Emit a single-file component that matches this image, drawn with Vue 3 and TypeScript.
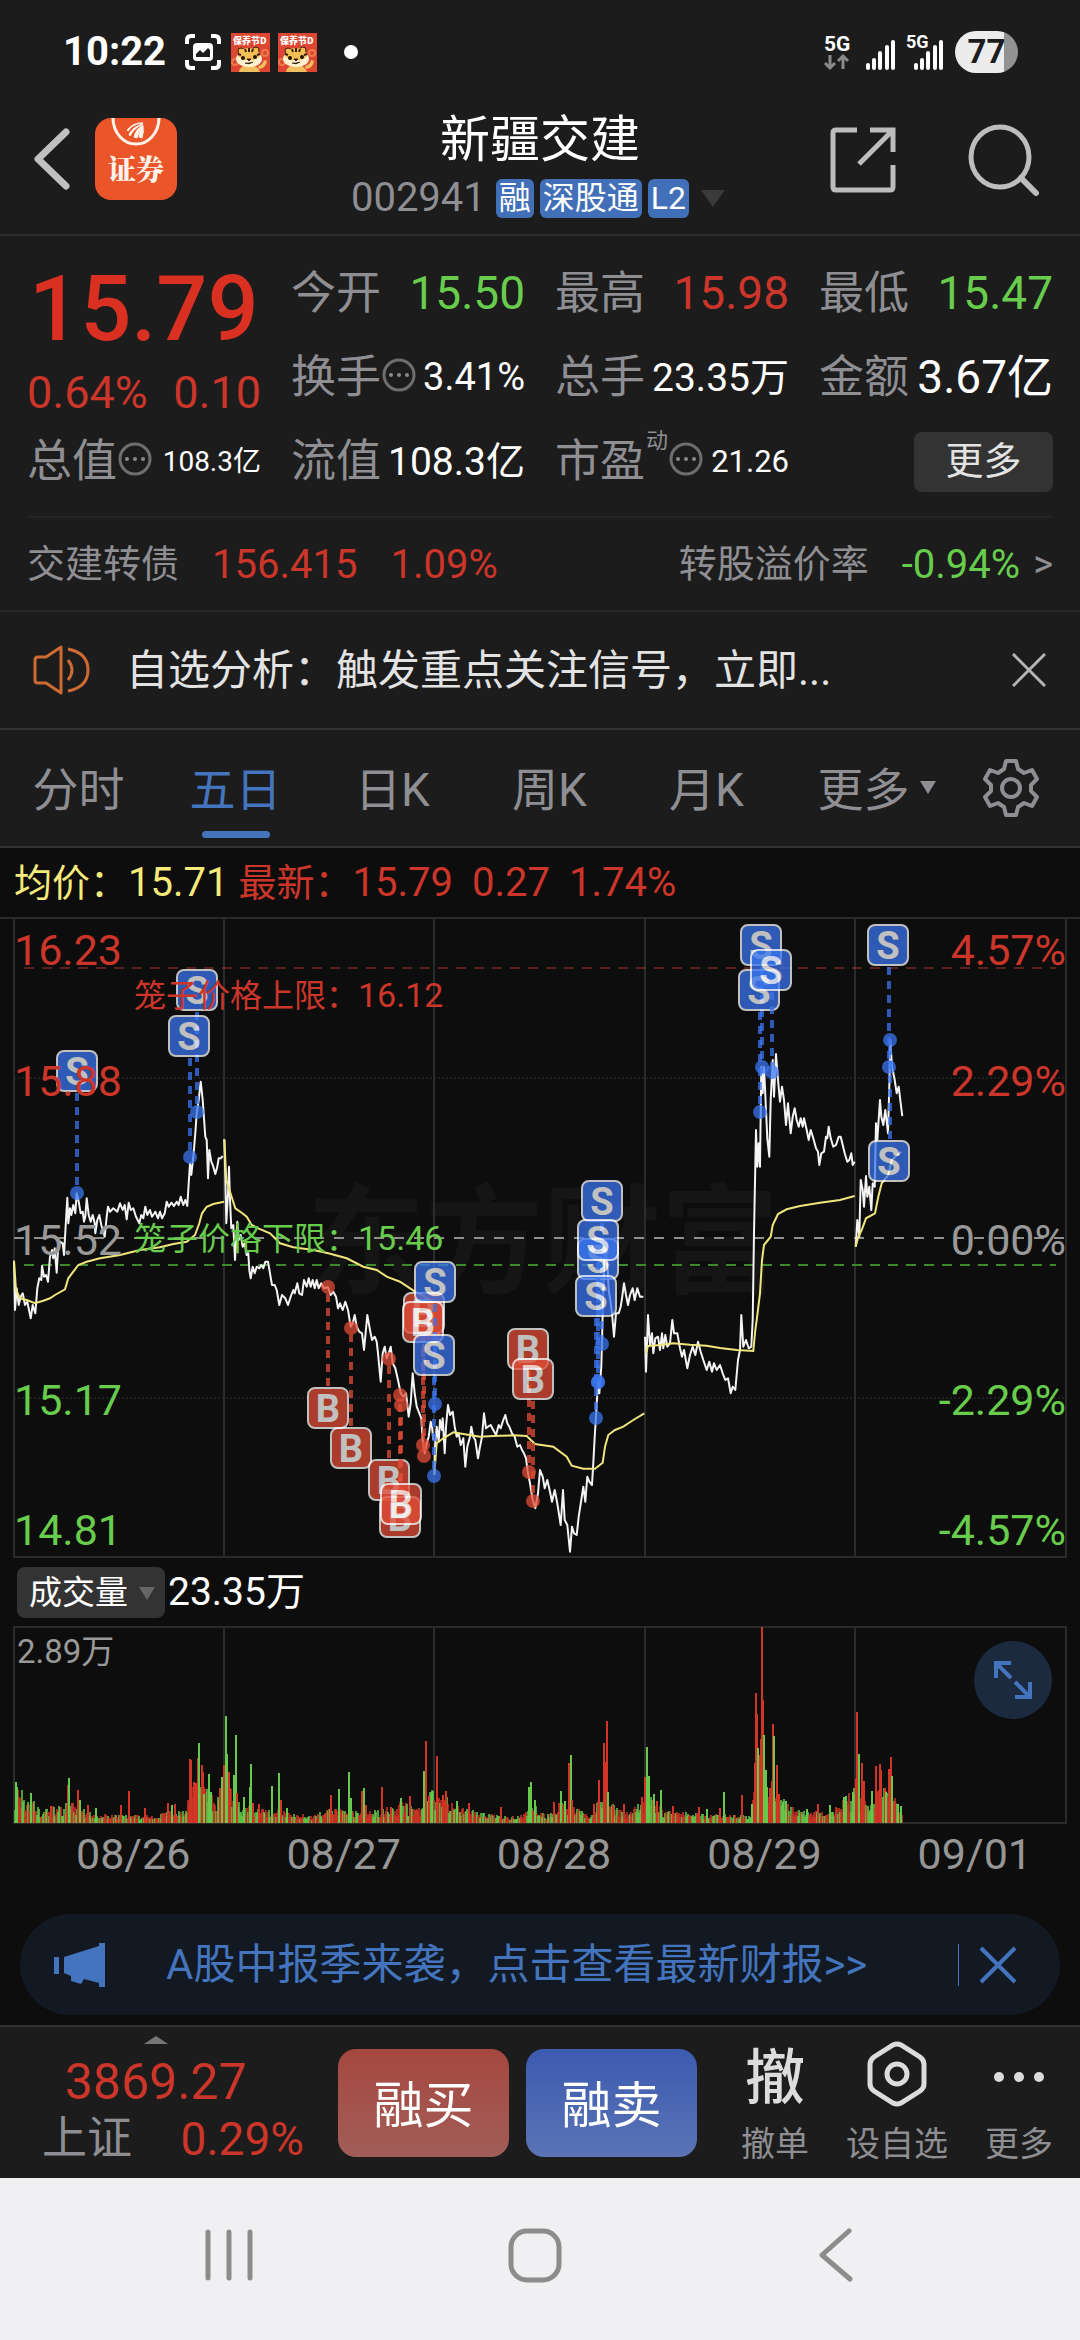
<script setup lang="ts">
import { ref } from 'vue'

type Tone = 'up' | 'down' | 'flat'
interface Quote { label: string; value: string; tone: Tone; size: string; info?: boolean; sup?: string }
interface Marker { side: 'S' | 'B'; x: number; y: number; dotX: number; dotY: number }
interface Bar { x: number; h: number; up: boolean; minor: boolean }

const quotes: Quote[] = [
  { label: '今开', value: '15.50', tone: 'down', size: 'lg' },
  { label: '最高', value: '15.98', tone: 'up', size: 'lg' },
  { label: '最低', value: '15.47', tone: 'down', size: 'lg' },
  { label: '换手', value: '3.41%', tone: 'flat', size: 'md', info: true },
  { label: '总手', value: '23.35万', tone: 'flat', size: 'md' },
  { label: '金额', value: '3.67亿', tone: 'flat', size: 'lg' },
]
const lastRow: Quote[] = [
  { label: '总值', value: '108.3亿', tone: 'flat', size: 'xs', info: true },
  { label: '流值', value: '108.3亿', tone: 'flat', size: 'md' },
  { label: '市盈', value: '21.26', tone: 'flat', size: 'sm', info: true, sup: '动' },
]

const tabs = ['分时', '五日', '日K', '周K', '月K', '更多']
const active = ref('五日')
const indicator = ref('成交量')
const dates = ['08/26', '08/27', '08/28', '08/29', '09/01']
const dayLines = [224, 434, 645, 855]

/* Samples are stored as "x,y" pairs at three units per chart pixel. */
function line(ox: number, oy: number, samples: string): string {
  return samples
    .split(' ')
    .map((p) => {
      const [x, y] = p.split(',').map(Number)
      return `${(ox + x / 3).toFixed(1)},${(oy + y / 3).toFixed(1)}`
    })
    .join(' ')
}

const priceLines: string[] = [
  line(0, 900, '42,1082 45,1230 50,1165 56,1215 62,1190 68,1180 75,1215 82,1205 92,1255 98,1215 106,1240 112,1165 118,1135 124,1140 126,1098 132,1130 138,1125 144,1145 150,1070 156,1050 160,1075 164,1045 170,1118 174,1050 180,1025 188,1030 192,1065 198,960 202,893 205,970 210,925 214,945 220,915 226,940 230,880 236,905 242,940 248,935 252,965 256,950 260,895 266,945 272,965 278,945 284,970 286,1000 292,960 298,945 304,975 314,1010 320,950 324,920 330,935 340,925 352,935 360,910 368,930 374,915 380,958 386,908 392,930 400,925 408,950 418,970 424,945 430,955 436,920 442,945 450,930 456,950 466,935 474,955 480,935 486,955 494,940 500,905 506,920 514,908 522,918 530,905 536,915 542,890 550,915 556,900 562,918 566,850 570,790 574,825 580,770 586,700 590,640 596,600 602,545 608,600 612,655 616,710 620,720 624,835 628,750 634,785 640,800 646,822 652,800 656,775 662,775 668,768'),
  line(0, 900, '673,718 676,830 679,970 684,880 687,800 690,900 694,985 700,975 705,1080 712,965 716,1020 722,1005 728,1040 734,1030 740,1065 745,1060 748,1110 752,1135 758,1100 764,1120 770,1100 778,1105 784,1095 790,1105 796,1085 804,1085 810,1120 816,1155 824,1155 830,1170 838,1215 846,1185 856,1195 864,1215 872,1190 880,1170 884,1180 892,1150 898,1180 906,1185 912,1140 920,1160 926,1135 932,1160 938,1140 944,1165 950,1140 956,1165 964,1150 972,1165 984,1162')
  + ' ' + line(320, 1180, '32,345 40,335 48,350 54,385 60,370 68,390 76,365 84,390 92,440 98,430 104,405 110,440 118,455 126,460 132,510 136,470 142,405 150,450 156,480 164,470 170,485 174,520 182,605 188,520 194,500 200,535 206,520 212,500 218,550 226,565 234,600 242,640 250,650 258,640 266,710 272,670 278,580 284,640 290,680 296,695 304,715 308,780 314,820 320,790 326,770 332,725 336,740 340,780'),
  line(320, 1180, '343,885 345,800 350,740 356,785 360,720 366,750 368,715 374,820 378,740 384,675 390,705 398,695 404,740 410,770 416,760 422,795 430,775 436,860 442,800 450,770 454,740 460,770 466,780 474,835 480,800 486,770 492,700 498,745 504,740 512,735 520,750 528,765 536,735 542,745 548,725 556,705 562,730 568,740 576,760 584,770 592,800 600,795 606,810 612,820 618,835 624,880 630,910 638,960 646,985 654,940 660,870 668,890 674,925 682,900 690,935 696,965 704,930 712,970 722,1035 729,930 734,1020 742,1035 750,1115 756,1040 762,1060 770,1065 776,1010 784,960 790,920 796,965 802,890 808,905 816,915 820,850 824,770 828,710 834,600 838,640 844,560 848,400 852,260 856,210 862,240 866,330 872,370 876,400 882,470 888,400 896,400 902,380 906,355 912,310 918,345 924,375 930,345 938,325 944,360 952,325 960,350 970,350'),
  line(320, 1180, '975,470 978,575 984,405 990,495 996,460 1000,520 1006,475 1014,470 1020,510 1026,460 1030,505 1036,465 1042,500 1050,490 1057,420 1062,460 1072,460 1080,505 1086,530 1092,510 1102,565 1110,525 1118,500 1126,525 1134,485 1142,515 1150,540 1160,570 1168,545 1176,575 1182,550 1190,570 1200,555 1208,580 1216,600 1224,595 1232,640 1238,620 1246,630 1254,540 1260,510 1264,405 1270,500 1278,480 1286,505 1294,500 1298,420')
  + ' ' + line(560, 900, '582,1000 588,690 592,800 596,730 600,800 604,500 608,580 612,500 618,630 622,715 628,770 632,600 638,480 642,590 648,462 654,540 660,605 666,560 672,600 678,675 684,610 692,700 698,650 704,625 710,660 716,680 722,655 728,680 732,655 740,690 746,720 752,690 760,715 768,745 774,755 778,795 784,760 792,755 798,710 802,715 806,680 812,715 820,740 828,735 836,710 842,710 848,735 854,760 862,785 868,780 874,760 878,795 884,785'),
  line(560, 900, '887,1040 892,960 898,1010 902,840 908,870 912,920 918,828 922,890 928,860 934,930 938,850 944,860 948,670 952,720 960,600 964,650 970,675 976,630 980,665 984,700 988,560 991,420 996,500 1004,540 1010,580 1016,560 1022,610 1027,648'),
]

const averageLines: string[] = [
  line(0, 900, '42,1082 48,1170 60,1195 80,1200 105,1210 130,1202 150,1195 165,1185 195,1168 205,1135 220,1115 235,1095 260,1085 300,1075 360,1065 420,1050 480,1042 520,1032 560,1025 585,1005 598,970 606,940 620,920 640,912 672,905'),
  line(0, 900, '673,718 679,840 690,875 706,925 725,938 740,950 755,975 775,985 810,1000 840,1030 880,1042 940,1050 985,1060 1040,1075 1090,1100 1130,1110 1160,1130 1200,1145 1245,1175 1270,1188 1303,1205'),
  line(320, 1180, '343,885 350,790 370,775 400,757 430,762 480,770 520,768 580,766 620,768 645,792 700,800 740,830 755,857 790,866 825,866 848,848 855,800 865,765 885,750 910,740 940,720 973,700'),
  line(320, 1180, '978,520 984,498 1020,495 1060,490 1110,494 1160,497 1200,504 1250,510 1300,513 1306,450')
  + ' ' + line(560, 900, '590,1260 600,1180 606,1080 612,1035 632,1010 638,975 654,942 680,928 720,918 780,908 840,900 884,888'),
  line(560, 900, '887,1040 895,1010 905,990 918,955 945,940 955,890 965,850 985,825 995,780 1024,755'),
]

const markers: Marker[] = [
  ['S', 77, 1071, 77, 1193], ['S', 197, 990, 197, 1112], ['S', 189, 1036, 190, 1157],
  ['B', 328, 1408, 328, 1287], ['B', 351, 1448, 351, 1328], ['B', 389, 1480, 389, 1359],
  ['B', 400, 1517, 401, 1405], ['B', 401, 1504, 400, 1395], ['B', 424, 1313, 423, 1445],
  ['B', 423, 1322, 424, 1456], ['S', 435, 1282, 435, 1404], ['S', 434, 1355, 434, 1476],
  ['B', 528, 1349, 529, 1472], ['B', 533, 1379, 533, 1501], ['S', 602, 1201, 602, 1344],
  ['S', 598, 1259, 598, 1382], ['S', 598, 1240, 598, 1382], ['S', 596, 1296, 596, 1418],
  ['S', 761, 945, 762, 1067], ['S', 759, 990, 760, 1112], ['S', 771, 970, 772, 1072],
  ['S', 888, 945, 889, 1067], ['S', 889, 1161, 890, 1040],
].map(([side, x, y, dotX, dotY]) => ({ side, x, y, dotX, dotY }) as Marker)

const leftLabels = [
  { y: 965, text: '16.23', tone: 'up' }, { y: 1096, text: '15.88', tone: 'up' },
  { y: 1255, text: '15.52', tone: 'mute' }, { y: 1415, text: '15.17', tone: 'down' },
  { y: 1545, text: '14.81', tone: 'down' },
]
const rightLabels = [
  { y: 965, text: '4.57%', tone: 'up' }, { y: 1096, text: '2.29%', tone: 'up' },
  { y: 1255, text: '0.00%', tone: 'mute' }, { y: 1415, text: '-2.29%', tone: 'down' },
  { y: 1545, text: '-4.57%', tone: 'down' },
]

/* Volume: minute-by-minute baseline envelope plus the individual large prints. */
const envelope: [number, number][] = [
  [14, 30], [28, 22], [40, 12], [60, 12], [70, 20], [85, 9], [95, 7], [150, 5], [170, 9], [185, 10], [190, 32],
  [205, 28], [215, 18], [225, 32], [240, 13], [260, 11], [275, 10], [285, 8], [310, 5], [325, 10], [345, 10],
  [365, 9], [380, 10], [400, 16], [420, 11], [430, 26], [445, 22], [460, 11], [480, 8], [510, 4], [525, 8],
  [535, 15], [545, 5], [560, 16], [570, 15], [580, 9], [590, 4], [595, 14], [605, 26], [615, 13], [625, 7],
  [640, 16], [650, 21], [665, 9], [700, 7], [730, 6], [750, 6], [758, 55], [766, 32], [776, 26], [785, 15],
  [800, 9], [830, 8], [840, 16], [855, 28], [870, 15], [880, 28], [890, 22], [902, 14],
]
const spikes = '15,41,g 16,36,g 30,30,g 50,17,r 67,38,r 68,45,g 71,20,r 77,33,r 79,23,g 87,18,r 95,15,g 120,18,r 128,32,r 144,15,r 167,20,r 171,18,g 174,19,r 189,64,r 190,63,r 193,41,r 195,40,r 197,65,r 198,80,g 201,58,r 202,51,r 203,29,g 208,49,g 210,31,g 219,35,r 221,46,g 223,58,r 225,107,g 226,69,g 228,51,r 229,35,r 233,48,g 235,88,g 236,30,r 243,26,g 249,36,g 250,59,g 252,20,r 258,19,r 271,37,g 278,50,g 280,23,r 286,15,g 330,28,r 338,34,g 348,51,g 350,25,g 361,32,r 363,35,g 365,18,r 381,36,r 390,16,r 400,25,g 409,27,r 423,52,g 425,82,r 428,27,r 431,31,g 436,67,r 442,28,r 445,32,r 456,22,g 468,20,r 500,16,r 528,36,g 530,41,g 534,23,g 553,21,r 560,32,g 564,22,g 568,60,r 570,68,g 571,23,r 593,19,r 598,43,r 603,80,r 605,61,r 606,102,r 607,31,g 612,18,r 623,19,r 641,26,r 644,46,r 646,76,g 648,47,g 653,29,g 656,22,r 660,33,g 672,17,r 698,16,r 706,14,g 719,15,r 723,31,g 741,28,r 751,19,g 754,60,r 755,130,r 756,109,r 757,75,g 759,68,r 760,84,r 761,196,r 762,123,r 763,88,g 765,53,g 766,36,g 769,35,r 771,42,r 772,99,r 773,87,g 776,58,r 778,29,r 782,20,g 785,22,g 806,14,g 817,19,r 829,18,g 843,26,g 845,27,g 852,31,g 855,44,r 856,111,r 858,69,g 861,60,r 863,42,r 871,32,g 875,57,r 879,59,r 880,53,r 884,35,r 885,31,g 888,54,r 890,66,r 891,47,g 893,21,r 897,19,g 900,17,g'

function buildBars(): Bar[] {
  const bars: Bar[] = []
  let seed = 17
  const next = () => (seed = (seed * 16807) % 2147483647) / 2147483647
  for (let x = 14; x <= 901; x++) {
    const i = Math.max(0, envelope.findIndex(([ex]) => ex >= x) - 1)
    const [x0, h0] = envelope[i]
    const [x1, h1] = envelope[i + 1]
    const base = h0 + ((h1 - h0) * (x - x0)) / (x1 - x0)
    bars.push({ x, h: Math.round(base * (0.4 + next() * 0.9)) + 1, up: next() > 0.48, minor: true })
  }
  for (const s of spikes.split(' ')) {
    const [x, h, c] = s.split(',')
    bars.push({ x: Number(x), h: Number(h), up: c === 'r', minor: false })
  }
  return bars
}
const bars = buildBars()
</script>

<template>
  <div class="screen">
    <div class="status">
      <div class="status-side">
        <span class="clock">10:22</span>
        <svg class="shot" width="36" height="36" viewBox="0 0 36 36" aria-hidden="true">
          <path d="M2 10V6q0-4 4-4h4M26 2h4q4 0 4 4v4M34 26v4q0 4-4 4h-4M10 34H6q-4 0-4-4v-4" fill="none" stroke="#fff" stroke-width="4" />
          <rect x="8" y="9" width="20" height="18" rx="4" fill="#fff" />
          <path d="M11 23v-3l4-4 3 3 5-5 2 2v7z" fill="#1c1c1c" />
        </svg>
        <svg v-for="n in 2" :key="n" class="promo" width="39" height="39" viewBox="0 0 39 39" aria-hidden="true">
          <rect width="39" height="39" fill="#dc4632" />
          <circle cx="34" cy="20" r="3" fill="none" stroke="#ee7a4a" stroke-width="2" />
          <circle cx="4" cy="29" r="3" fill="none" stroke="#ee7a4a" stroke-width="2" />
          <text x="2" y="11" class="promo-text">保养节D</text>
          <path d="M8 39q1-7 10-7t11 7z" fill="#f0c060" />
          <path d="M28 36q7-1 8-8l-3-1q-1 5-6 6z" fill="#f0c060" />
          <circle cx="10" cy="18" r="3" fill="#f4b84a" stroke="#38200f" stroke-width="1" />
          <circle cx="25" cy="17" r="3" fill="#f4b84a" stroke="#38200f" stroke-width="1" />
          <ellipse cx="18" cy="26" rx="13" ry="8" fill="#fff1d0" />
          <path d="M7 23q1-8 11-8t11 8q-4 5-11 4-7 1-11-4z" fill="#f4c055" />
          <path d="M14 16l1 3M18 15v4M22 16l-1 3M7 21l3 1M29 21l-3 1" stroke="#38200f" stroke-width="2" />
          <circle cx="12" cy="25" r="2" fill="#221208" />
          <circle cx="24" cy="24" r="2" fill="#221208" />
          <path d="M16 26h4l-2 2zM14 30q4 2 8-1" stroke="#38200f" fill="#38200f" stroke-width="1" />
        </svg>
        <span class="dot"></span>
      </div>
      <div class="status-side">
        <svg width="120" height="40" viewBox="0 0 120 40" aria-hidden="true">
          <text x="0" y="19" class="net">5G</text>
          <path d="M6 23v13M1 31l5 5 5-5M19 37V24M14 29l5-5 5 5" fill="none" stroke="#8a8a8a" stroke-width="3" />
          <path d="M44 33v3M50 28v8M56 21v15M63 15v21M69 10v26" stroke="#fff" stroke-width="4" stroke-linecap="round" fill="none" />
          <path d="M92 33v3M98 28v8M104 21v15M111 15v21M117 10v26" stroke="#fff" stroke-width="4" stroke-linecap="round" fill="none" />
          <text x="82" y="16" class="net-small">5G</text>
        </svg>
        <span class="battery">77</span>
      </div>
    </div>

    <header class="header">
      <div class="header-left">
        <button class="plain" aria-label="返回">
          <svg width="38" height="62" viewBox="0 0 38 62"><path d="M33 4L5 31l28 27" fill="none" stroke="#c0c0c0" stroke-width="7" stroke-linecap="round" stroke-linejoin="round" /></svg>
        </button>
        <a class="app" href="#" aria-label="证券">
          <svg width="82" height="82" viewBox="0 0 82 82">
            <rect width="82" height="82" rx="16" fill="#ea552a" />
            <path d="M18 0a23 26 0 0 0 46 0" fill="none" stroke="#fff3ea" stroke-width="3" />
            <path d="M32 12q7-8 16-7-11 1-15 8zM34 16q5-8 14-10-9 4-13 12zM39 19q2-8 9-12-4 6-6 13zM44 19q1-7 4-11 1 6-1 12z" fill="#fff3ea" stroke="#fff3ea" stroke-width="1" />
            <text x="41" y="62" text-anchor="middle" class="app-text">证券</text>
          </svg>
        </a>
      </div>
      <div class="title">
        <h1>新疆交建</h1>
        <div class="code">
          <span class="digits">002941</span>
          <span class="tag">融</span><span class="tag">深股通</span><span class="tag">L2</span>
          <svg class="code-arrow" width="24" height="17" viewBox="0 0 24 17"><path d="M0 0h24L12 17z" fill="#3a3a3a" /></svg>
        </div>
      </div>
      <div class="header-right">
        <button class="plain" aria-label="分享">
          <svg width="66" height="66" viewBox="0 0 66 66"><path d="M27 3H6Q3 3 3 6v54q0 3 3 3h54q3 0 3-3V38M40 3h23v22M63 3L29 37" fill="none" stroke="#bdbdbd" stroke-width="5" /></svg>
        </button>
        <button class="plain" aria-label="搜索">
          <svg width="72" height="72" viewBox="0 0 72 72"><ellipse cx="32" cy="33" rx="29" ry="30" fill="none" stroke="#bdbdbd" stroke-width="5" /><path d="M53 54l15 15" stroke="#bdbdbd" stroke-width="6" stroke-linecap="round" /></svg>
        </button>
      </div>
    </header>

    <section class="quote">
      <div class="price-block">
        <div class="price">15.79</div>
        <div class="change"><span>0.64%</span><span>0.10</span></div>
      </div>
      <div v-for="q in [...quotes, ...lastRow]" :key="q.label" class="cell" :class="{ first: q.label === '总值' }">
        <span class="cell-label">{{ q.label }}</span>
        <sup v-if="q.sup" class="sup">{{ q.sup }}</sup>
        <svg v-if="q.info" class="info" width="34" height="34" viewBox="0 0 34 34" aria-hidden="true">
          <circle cx="17" cy="17" r="15" fill="none" stroke="#6e6e6e" stroke-width="3" />
          <circle cx="9" cy="17" r="2" fill="#8a8a8a" /><circle cx="17" cy="17" r="2" fill="#8a8a8a" /><circle cx="25" cy="17" r="2" fill="#8a8a8a" />
        </svg>
        <span class="cell-value" :class="[q.tone, q.size]">{{ q.value }}</span>
      </div>
      <div class="cell end"><button class="more">更多</button></div>
    </section>

    <section class="bond">
      <span class="mute">交建转债</span>
      <span class="up figure">156.415</span>
      <span class="up figure">1.09%</span>
      <span class="mute push">转股溢价率</span>
      <span class="down figure">-0.94%</span>
      <span class="mute chevron">&gt;</span>
    </section>

    <section class="notice">
      <svg width="58" height="50" viewBox="0 0 58 50" aria-hidden="true">
        <path d="M2 15q0-3 3-3h8L28 2v46L13 38H5q-3 0-3-3zM35 15q8 10 0 20M35 4q20 4 20 21T35 46" fill="none" stroke="#cf6a33" stroke-width="3" stroke-linejoin="round" />
      </svg>
      <p>自选分析：触发重点关注信号，立即...</p>
      <button class="plain" aria-label="关闭">
        <svg width="34" height="34" viewBox="0 0 34 34"><path d="M1 1l32 32M33 1L1 33" stroke="#b4b4b4" stroke-width="3" /></svg>
      </button>
    </section>

    <nav class="tabs">
      <button v-for="t in tabs" :key="t" class="tab" :class="{ on: active === t }" @click="active = t">
        <span class="tab-name">{{ t }}<i v-if="t === '更多'" class="tab-arrow"></i></span>
      </button>
      <button class="tab" aria-label="设置">
        <svg width="58" height="58" viewBox="0 0 58 58">
          <path d="M24 2h10l2 8 6 4 8-3 5 9-6 6v6l6 6-5 9-8-3-6 4-2 8H24l-2-8-6-4-8 3-5-9 6-6v-6l-6-6 5-9 8 3 6-4z" fill="none" stroke="#8e8e93" stroke-width="4" stroke-linejoin="round" />
          <circle cx="29" cy="29" r="9" fill="none" stroke="#8e8e93" stroke-width="4" />
        </svg>
      </button>
    </nav>

    <main class="chart">
      <div class="legend">
        <span class="avg"><span class="legend-name">均价：</span>15.71</span>
        <span class="up"><span class="legend-name">最新：</span>15.79</span>
        <span class="up legend-gap">0.27</span>
        <span class="up legend-gap">1.74%</span>
      </div>

      <svg class="plot" viewBox="0 917 1080 642" role="img" aria-label="五日走势">
        <text x="307" y="1284" class="watermark">东方财富</text>
        <g stroke="#2b2b2b" stroke-width="2" fill="none">
          <path d="M0 918H1080" />
          <path d="M14 918V1557H1066V918" />
          <path v-for="x in dayLines" :key="x" :d="`M${x} 918V1557`" />
        </g>
        <path d="M14 1078H1066M14 1398H1066" stroke="#333" stroke-width="1" stroke-dasharray="2 2" />
        <path d="M24 968H1056" stroke="#a03a2e" stroke-width="1" stroke-dasharray="10 8" />
        <path d="M14 1238H1066" stroke="#8f8f8f" stroke-width="2" stroke-dasharray="10 10" />
        <path d="M24 1265H1056" stroke="#3c8a2c" stroke-width="2" stroke-dasharray="10 8" />
        <polyline v-for="(p, i) in priceLines" :key="'p' + i" :points="p" class="price-line" />
        <polyline v-for="(p, i) in averageLines" :key="'a' + i" :points="p" class="avg-line" />
        <g v-for="(m, i) in markers" :key="i" class="marker" :class="m.side">
          <path :d="`M${m.dotX} ${m.dotY > m.y ? m.y + 22 : m.y - 22}V${m.dotY}`" class="stem" />
          <circle :cx="m.dotX" :cy="m.dotY" r="7" />
          <rect :x="m.x - 20" :y="m.y - 20" width="40" height="40" rx="7" />
          <text :x="m.x" :y="m.y + 14" text-anchor="middle">{{ m.side }}</text>
        </g>
        <text v-for="l in leftLabels" :key="l.text" x="14" :y="l.y" class="axis" :class="l.tone">{{ l.text }}</text>
        <text v-for="l in rightLabels" :key="l.text" x="1066" :y="l.y" text-anchor="end" class="axis" :class="l.tone">{{ l.text }}</text>
        <text x="134" y="1007" class="cage up">笼子价格上限：<tspan class="cage-price">16.12</tspan></text>
        <text x="134" y="1250" class="cage down">笼子价格下限：<tspan class="cage-price">15.46</tspan></text>
      </svg>

      <div class="volume-head">
        <div class="picker">
          <select v-model="indicator" aria-label="指标">
            <option>成交量</option>
          </select>
          <i class="picker-arrow"></i>
        </div>
        <span>23.35万</span>
      </div>

      <div class="volume">
        <svg class="plot" viewBox="0 1626 1080 199" role="img" aria-label="成交量">
          <g stroke="#2b2b2b" stroke-width="2" fill="none">
            <path d="M14 1627H1066V1823H14Z" />
            <path v-for="x in dayLines" :key="x" :d="`M${x} 1627V1823`" />
          </g>
          <rect v-for="(b, i) in bars" :key="i" :x="b.x" :y="1823 - b.h" width="2" :height="b.h" :class="[b.up ? 'bar-up' : 'bar-down', { minor: b.minor }]" />
          <text x="17" y="1663" class="vol-max">2.89万</text>
        </svg>
        <button class="expand" aria-label="全屏">
          <svg width="40" height="40" viewBox="0 0 40 40"><path d="M3 18V3h15M3 3l15 15M37 22v15H22M37 37L22 22" fill="none" stroke="#4474bd" stroke-width="4" /></svg>
        </button>
      </div>

      <div class="dates"><span v-for="d in dates" :key="d">{{ d }}</span></div>

      <div class="banner">
        <svg width="52" height="46" viewBox="0 0 52 46" aria-hidden="true">
          <path d="M0 15h5v17H0zM10 15l35-11V1h6v44h-6v-4l-15-4-3 5-10-3v-5l-7-3z" fill="#4474bd" />
        </svg>
        <a href="#">A股中报季来袭，点击查看最新财报&gt;&gt;</a>
        <button class="banner-close" aria-label="关闭">
          <svg width="38" height="38" viewBox="0 0 38 38"><path d="M2 2l34 34M36 2L2 36" stroke="#4474bd" stroke-width="4" /></svg>
        </button>
      </div>
    </main>

    <footer class="trade">
      <div class="index">
        <svg class="index-arrow" width="24" height="8" viewBox="0 0 24 8"><path d="M0 8L12 0l12 8z" fill="#777" /></svg>
        <div class="index-value">3869.27</div>
        <div class="index-row"><span class="mute index-name">上证</span><span class="up">0.29%</span></div>
      </div>
      <button class="deal buy">融买</button>
      <button class="deal sell">融卖</button>
      <div class="tools">
        <button class="tool">
          <span class="tool-icon glyph">撤</span><span>撤单</span>
        </button>
        <button class="tool">
          <span class="tool-icon">
            <svg width="60" height="66" viewBox="0 0 60 66"><path d="M26 4q4-2 8 0l19 12q4 3 4 7v20q0 4-4 7L34 62q-4 2-8 0L7 50q-4-3-4-7V23q0-4 4-7z" fill="none" stroke="#dcdcdc" stroke-width="5" /><circle cx="30" cy="33" r="10" fill="none" stroke="#dcdcdc" stroke-width="5" /></svg>
          </span><span>设自选</span>
        </button>
        <button class="tool">
          <span class="tool-icon">
            <svg width="52" height="60" viewBox="0 0 52 60"><circle cx="6" cy="33" r="5" fill="#dcdcdc" /><circle cx="26" cy="33" r="5" fill="#dcdcdc" /><circle cx="46" cy="33" r="5" fill="#dcdcdc" /></svg>
          </span><span>更多</span>
        </button>
      </div>
    </footer>

    <nav class="system">
      <button class="plain" aria-label="最近任务">
        <svg width="48" height="52" viewBox="0 0 48 52"><path d="M3 3v46M24 3v46M45 3v46" stroke="#8c8c8c" stroke-width="5" stroke-linecap="round" /></svg>
      </button>
      <button class="plain" aria-label="主屏幕">
        <svg width="56" height="56" viewBox="0 0 56 56"><rect x="4" y="4" width="48" height="49" rx="16" fill="none" stroke="#8c8c8c" stroke-width="5" /></svg>
      </button>
      <button class="plain" aria-label="返回">
        <svg width="36" height="56" viewBox="0 0 36 56"><path d="M32 4L5 28l28 24" fill="none" stroke="#8c8c8c" stroke-width="5" stroke-linecap="round" stroke-linejoin="round" /></svg>
      </button>
    </nav>
  </div>
</template>

<style>
body {
  background: #f0f0f2;
}
</style>

<style scoped>
.screen {
  display: flex;
  flex-direction: column;
  min-height: 100vh;
  background: #1c1c1c;
  color: #fff;
  font-family: Roboto, "Noto Sans CJK SC", sans-serif;
  font-size: 38px;
  line-height: 1.2;
}
.screen * {
  box-sizing: border-box;
}
button,
select {
  border: 0;
  background: none;
  color: inherit;
  font: inherit;
  padding: 0;
}
a {
  color: inherit;
  text-decoration: none;
}
svg {
  display: block;
  flex: none;
}
.plain {
  display: block;
}
.up {
  color: #cc3529;
  fill: #cc3529;
}
.down {
  color: #68cc4c;
  fill: #68cc4c;
}
.mute {
  color: #8e8e93;
  fill: #999;
}
.flat {
  color: #fff;
}

/* status bar */
.status {
  display: flex;
  justify-content: space-between;
  align-items: center;
  height: 100px;
  padding: 4px 62px 0 63px;
}
.status-side {
  display: flex;
  align-items: center;
}
.clock {
  font-size: 40px;
  font-weight: 700;
}
.shot {
  margin: 0 10px 0 19px;
}
.promo {
  margin-right: 8px;
}
.promo-text {
  font: 900 9px "Noto Sans CJK SC", sans-serif;
  fill: #fff;
}
.net {
  font: 700 21px Roboto, sans-serif;
  fill: #fff;
}
.net-small {
  font: 700 18px Roboto, sans-serif;
  fill: #fff;
}
.dot {
  width: 14px;
  height: 14px;
  margin-left: 19px;
  border-radius: 50%;
  background: #fff;
}
.battery {
  width: 63px;
  height: 42px;
  margin-left: 11px;
  border-radius: 21px;
  background: linear-gradient(90deg, #ececec 77%, #929292 77%);
  color: #1c1c1c;
  font-size: 33px;
  font-weight: 700;
  line-height: 42px;
  text-align: center;
}

/* header */
.header {
  display: grid;
  grid-template-columns: 1fr auto 1fr;
  align-items: center;
  height: 136px;
  border-bottom: 2px solid #2c2c2c;
}
.header-left,
.header-right {
  display: flex;
  align-items: center;
}
.header-left {
  gap: 24px;
  padding: 0 0 16px 33px;
}
.header-right {
  justify-content: flex-end;
  gap: 72px;
  padding: 0 40px 14px 0;
}
.app-text {
  font: 900 28px "Noto Serif CJK SC", "Noto Sans CJK SC", serif;
  fill: #fff3ea;
}
.title {
  padding-top: 2px;
}
h1 {
  margin: 0;
  font-size: 50px;
  font-weight: 400;
  line-height: 60px;
  text-align: center;
}
.code {
  display: flex;
  align-items: center;
  gap: 6px;
  height: 56px;
  padding-right: 4px;
}
.digits {
  margin-right: 4px;
  color: #8e8e93;
  font-size: 40px;
}
.tag {
  height: 39px;
  padding: 0 3px;
  border-radius: 6px;
  background: #4270b8;
  font-size: 32px;
  line-height: 39px;
}
.code-arrow {
  margin-left: 6px;
}

/* quote grid */
.quote {
  display: grid;
  grid-template-columns: repeat(4, minmax(0, 1fr));
  grid-template-rows: repeat(3, 84px);
  column-gap: 30px;
  margin: 0 27px;
  padding: 16px 0 12px;
  border-bottom: 2px solid #232323;
}
.price-block {
  grid-row: 1 / 3;
  color: #d93022;
}
.price {
  height: 104px;
  padding-left: 2px;
  font-size: 90px;
  font-weight: 500;
  line-height: 116px;
}
.change {
  display: flex;
  justify-content: space-between;
  color: #cc3529;
  font-size: 45px;
  line-height: 74px;
}
.cell {
  display: flex;
  align-items: center;
  white-space: nowrap;
}
.cell.first {
  grid-column: 1;
}
.cell.end {
  justify-content: flex-end;
}
.cell-label {
  color: #8e8e93;
  font-size: 45px;
}
.cell-value {
  margin-left: auto;
}
.lg {
  font-size: 46px;
}
.md {
  font-size: 39px;
}
.info + .md {
  font-size: 38px;
}
.sm {
  font-size: 31px;
}
.xs {
  font-size: 28px;
}
.info {
  margin: 0 0 6px 1px;
}
.sup {
  align-self: flex-start;
  margin: 6px 0 0 1px;
  color: #8e8e93;
  font-size: 22px;
  line-height: 30px;
}
.more {
  width: 139px;
  height: 60px;
  border-radius: 8px;
  background: #333;
  color: #e3e3e3;
  font-size: 38px;
}

/* bond and notice rows */
.bond {
  display: flex;
  align-items: center;
  height: 94px;
  padding: 2px 27px 0;
  border-bottom: 2px solid #262626;
}
.figure {
  margin-left: 33px;
  font-size: 40px;
}
.push {
  margin-left: auto;
}
.chevron {
  margin-left: 13px;
}
.notice {
  display: flex;
  align-items: center;
  height: 118px;
  padding: 0 34px 0 33px;
  border-bottom: 2px solid #323232;
}
.notice p {
  flex: 1;
  margin: 0 0 0 35px;
  padding-top: 2px;
  color: #e3e3e3;
  font-size: 42px;
  line-height: 60px;
}

/* period tabs */
.tabs {
  display: grid;
  grid-template-columns: repeat(6, 157fr) 138fr;
  height: 118px;
  border-bottom: 2px solid #323232;
}
.tab {
  position: relative;
  display: flex;
  align-items: center;
  justify-content: center;
  color: #8e8e93;
  font-size: 46px;
}
.tab-name {
  position: relative;
  padding-top: 6px;
}
.tab.on {
  color: #4474bd;
}
.tab.on::after {
  content: "";
  position: absolute;
  bottom: 8px;
  left: 50%;
  width: 68px;
  height: 7px;
  margin-left: -34px;
  border-radius: 4px;
  background: #4474bd;
}
.tab-arrow {
  position: absolute;
  top: 50%;
  left: 100%;
  margin: -7px 0 0 10px;
  border: 8px solid transparent;
  border-top: 13px solid #8e8e93;
  border-bottom: 0;
}

/* chart */
.chart {
  padding-bottom: 10px;
  background: #0d0d0d;
}
.legend {
  display: flex;
  align-items: center;
  height: 69px;
  padding-left: 14px;
  font-size: 40px;
  gap: 10px;
}
.legend-name {
  font-size: 38px;
}
.legend-gap {
  margin-left: 9px;
}
.avg {
  color: #f5ea7a;
}
.plot {
  width: 100%;
  height: auto;
}
.watermark {
  fill: #151515;
  font-size: 118px;
  font-weight: 700;
}
.price-line {
  fill: none;
  stroke: #f4f4f4;
  stroke-width: 2;
  stroke-linejoin: round;
}
.avg-line {
  fill: none;
  stroke: #f0e47c;
  stroke-width: 2;
}
.marker {
  opacity: 0.74;
  fill: #3a76f0;
}
.marker.B {
  fill: #e24c36;
}
.marker rect {
  stroke: #fff;
  stroke-width: 2;
}
.marker text {
  fill: #fff;
  font-size: 38px;
  font-weight: 700;
}
.stem {
  stroke: #3a76f0;
  stroke-width: 4;
  stroke-dasharray: 8 6;
}
.B .stem {
  stroke: #e24c36;
}
.axis {
  font-size: 43px;
}
.cage {
  font-size: 32px;
}
.cage-price {
  font-size: 34px;
}
.volume-head {
  display: flex;
  align-items: center;
  gap: 3px;
  height: 67px;
  padding-left: 17px;
  font-size: 39px;
}
.picker {
  position: relative;
}
.picker select {
  display: block;
  width: 148px;
  height: 51px;
  padding-left: 12px;
  border-radius: 8px;
  background: #333;
  font-size: 33px;
  line-height: 51px;
  appearance: none;
}
.picker-arrow {
  position: absolute;
  top: 20px;
  right: 10px;
  border: 8px solid transparent;
  border-top: 13px solid #666;
  border-bottom: 0;
  pointer-events: none;
}
.volume {
  position: relative;
}
.bar-up {
  fill: #d23426;
}
.bar-down {
  fill: #66c94b;
}
.minor {
  opacity: 0.75;
}
.vol-max {
  fill: #999;
  font-size: 33px;
}
.expand {
  position: absolute;
  top: 15px;
  right: 28px;
  display: flex;
  align-items: center;
  justify-content: center;
  width: 78px;
  height: 78px;
  border-radius: 50%;
  background: #1c2a40;
}
.dates {
  display: flex;
  padding-left: 28px;
  color: #969696;
  font-size: 43px;
  line-height: 58px;
}
.dates span {
  flex: 1;
  text-align: center;
}
.banner {
  display: flex;
  align-items: center;
  height: 101px;
  margin: 31px 20px 0;
  padding: 0 43px 0 34px;
  border-radius: 51px;
  background: #121922;
}
.banner a {
  flex: 1;
  margin-left: 60px;
  padding-top: 2px;
  color: #4474bd;
  font-size: 42px;
}
.banner-close {
  padding: 2px 0 2px 20px;
  border-left: 1px solid #4474bd;
}

/* trade bar */
.trade {
  display: flex;
  align-items: center;
  height: 153px;
  border-top: 2px solid #323232;
}
.index {
  position: relative;
  width: 312px;
  margin-right: 26px;
  padding: 13px 8px 0 42px;
}
.index-arrow {
  position: absolute;
  top: -3px;
  left: 144px;
}
.index-value {
  color: #cc3529;
  font-size: 50px;
  line-height: 60px;
  padding-left: 23px;
}
.index-row {
  display: flex;
  justify-content: space-between;
  font-size: 46px;
  line-height: 54px;
}
.index-name {
  font-size: 45px;
}
.deal {
  width: 171px;
  height: 108px;
  margin-right: 17px;
  padding-top: 6px;
  border-radius: 18px;
  font-size: 50px;
}
.buy {
  background: linear-gradient(#a5483f, #a25d58);
}
.sell {
  background: linear-gradient(#3c5ab0, #5a74b5);
}
.tools {
  display: flex;
  flex: 1;
  justify-content: space-between;
  padding: 0 27px;
}
.tool {
  display: flex;
  flex-direction: column;
  align-items: center;
  color: #8e8e93;
  font-size: 34px;
  line-height: 46px;
}
.tool-icon {
  display: flex;
  align-items: center;
  height: 70px;
  margin-bottom: 12px;
}
.glyph {
  padding-top: 10px;
  color: #dcdcdc;
  font-size: 60px;
  font-weight: 500;
}

/* system navigation */
.system {
  display: flex;
  flex: 1;
  align-items: center;
  justify-content: space-between;
  min-height: 120px;
  padding: 0 21% 8px 19%;
  background: #f0f0f2;
}
</style>
